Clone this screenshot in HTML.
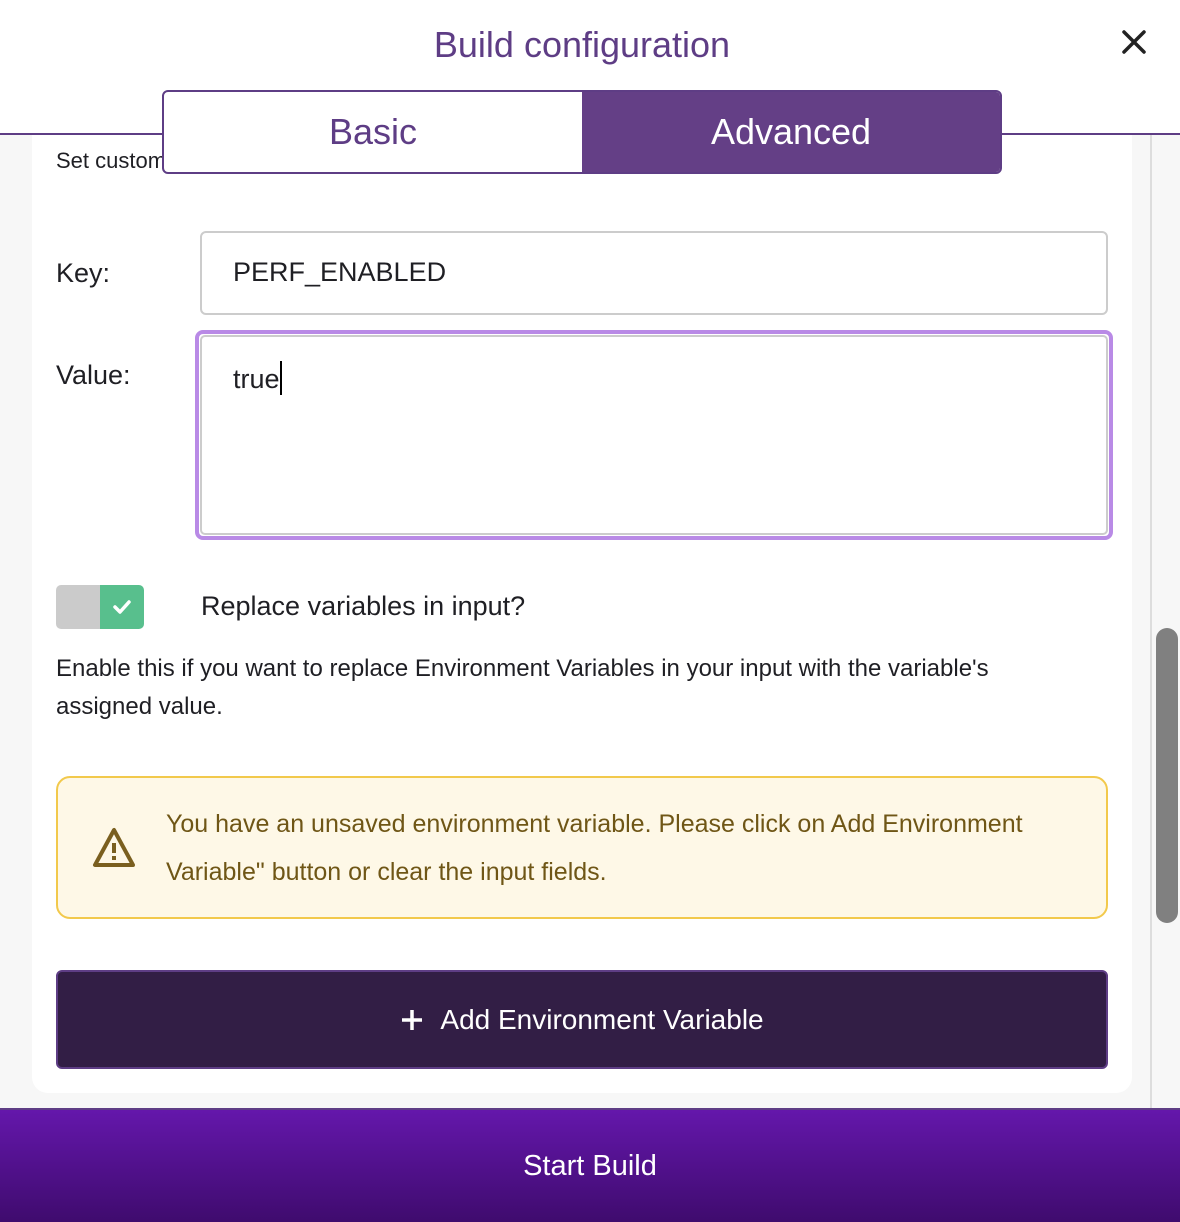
<!DOCTYPE html>
<html><head><meta charset="utf-8"><style>
*{box-sizing:border-box;margin:0;padding:0}
body{width:1180px;height:1222px;position:relative;overflow:hidden;background:#fff;font-family:"Liberation Sans",sans-serif;color:#1f1f24}
.abs{position:absolute}
</style></head><body>
<div class="abs" style="left:0;top:135px;width:1180px;height:975px;background:#f7f7f7"></div>
<div class="abs" style="left:0;top:133px;width:1180px;height:2px;background:#5e3d85"></div>
<div class="abs" style="left:32px;top:135px;width:1100px;height:958px;background:#fff;border-radius:0 0 16px 16px"></div>
<div class="abs" style="left:1150px;top:135px;width:2px;height:975px;background:#ddd"></div>
<div class="abs" style="left:1156px;top:628px;width:22px;height:295px;background:#808080;border-radius:11px"></div>

<div class="abs" style="left:0;top:24px;width:1164px;text-align:center;font-size:36px;color:#5e3d85">Build configuration</div>
<svg class="abs" style="left:1120px;top:28px" width="28" height="28" viewBox="0 0 28 28"><path d="M4 4L24 24M24 4L4 24" stroke="#222" stroke-width="3.5" stroke-linecap="round"/></svg>

<div class="abs" style="left:56px;top:148px;font-size:22px">Set custom</div>
<div class="abs" style="left:162px;top:90px;width:840px;height:84px;border:2px solid #5e3d85;border-radius:6px;background:#fff;overflow:hidden;display:flex">
<div style="width:418px;display:flex;align-items:center;justify-content:center;font-size:36px;color:#5e3d85">Basic</div>
<div style="flex:1;background:#643f86;display:flex;align-items:center;justify-content:center;font-size:36px;color:#fff">Advanced</div>
</div>

<div class="abs" style="left:56px;top:258px;font-size:27px">Key:</div>
<div class="abs" style="left:200px;top:231px;width:908px;height:84px;border:2px solid #ccc;border-radius:6px;padding:24px 31px;font-size:27px">PERF_ENABLED</div>
<div class="abs" style="left:56px;top:360px;font-size:27px">Value:</div>
<div class="abs" style="left:195px;top:330px;width:918px;height:210px;border:4px solid #b98ae6;border-radius:8px"></div>
<div class="abs" style="left:200px;top:335px;width:908px;height:200px;border:2px solid #ccc;border-radius:5px;padding:24px 31px;font-size:27px">true<span style="display:inline-block;width:2px;height:34px;background:#000;vertical-align:-7px"></span></div>

<div class="abs" style="left:56px;top:585px;width:88px;height:44px;border-radius:5px;overflow:hidden;display:flex">
<div style="width:44px;background:#cbcbcb"></div>
<div style="width:44px;background:#58bf8d;display:flex;align-items:center;justify-content:center"><svg width="20" height="16" viewBox="0 0 20 16"><path d="M3 8l5 5 9-10" stroke="#fff" stroke-width="3.5" fill="none" stroke-linecap="round" stroke-linejoin="round"/></svg></div>
</div>
<div class="abs" style="left:201px;top:591px;font-size:27px">Replace variables in input?</div>
<div class="abs" style="left:56px;top:650px;width:1030px;font-size:24px;line-height:38px">Enable this if you want to replace Environment Variables in your input with the variable's assigned value.</div>

<div class="abs" style="left:56px;top:776px;width:1052px;height:143px;border:2px solid #f2c94c;border-radius:14px;background:#fef8e7"></div>
<svg class="abs" style="left:92px;top:826px" width="44" height="44" viewBox="0 0 44 44"><path d="M22 4L3 39h38z" stroke="#7a5f1f" stroke-width="4" fill="none" stroke-linejoin="round"/><path d="M22 17v10" stroke="#7a5f1f" stroke-width="4"/><rect x="20" y="30" width="4" height="4" fill="#7a5f1f"/></svg>
<div class="abs" style="left:166px;top:800px;width:920px;font-size:25px;line-height:48px;color:#6f5616">You have an unsaved environment variable. Please click on Add Environment Variable" button or clear the input fields.</div>

<div class="abs" style="left:56px;top:970px;width:1052px;height:99px;background:#321e45;border:2px solid #5e3d85;border-radius:6px;display:flex;align-items:center;justify-content:center;color:#fff;font-size:28px">
<svg width="24" height="24" viewBox="0 0 24 24" style="margin-right:16px"><path d="M12 2v20M2 12h20" stroke="#fff" stroke-width="3.5"/></svg>Add Environment Variable</div>

<div class="abs" style="left:0;top:1108px;width:1180px;height:114px;background:linear-gradient(#6417ab,#3f0b6e);border-top:2px solid #5e3d85;display:flex;align-items:center;justify-content:center;color:#fff;font-size:29px">Start Build</div>
</body></html>
